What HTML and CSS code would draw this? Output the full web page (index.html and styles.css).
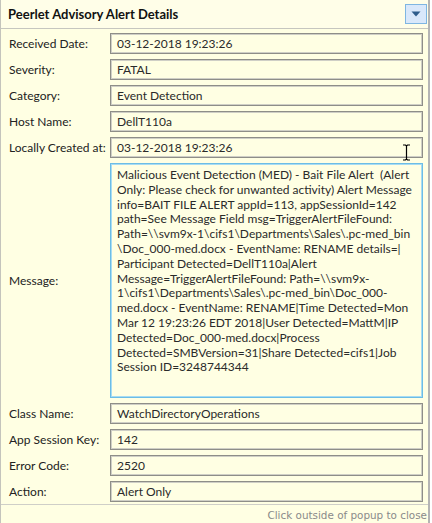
FILE: index.html
```html
<!DOCTYPE html>
<html>
<head>
<meta charset="utf-8">
<link rel="stylesheet" href="styles.css">
</head>
<body>
<div class="popup">
  <div class="header">
    <span class="title">Peerlet Advisory Alert Details</span>
    <span class="dropbtn"><svg width="10" height="6" viewBox="0 0 10 6"><path d="M0.5 0.5 H9.5 L5 5.5 Z" fill="#2f5d8c"/></svg></span>
  </div>
  <div class="form">
    <div class="label">Received Date:</div><div class="field">03-12-2018 19:23:26</div>
    <div class="label">Severity:</div><div class="field">FATAL</div>
    <div class="label">Category:</div><div class="field">Event Detection</div>
    <div class="label">Host Name:</div><div class="field">DellT110a</div>
    <div class="label">Locally Created at:</div><div class="field">03-12-2018 19:23:26</div>
    <div class="label">Message:</div>
    <div class="field message"><div>Malicious Event Detection (MED) - Bait File Alert  (Alert</div><div>Only: Please check for unwanted activity) Alert Message</div><div>info=BAIT FILE ALERT appId=113, appSessionId=142</div><div>path=See Message Field msg=TriggerAlertFileFound:</div><div>Path=\\svm9x-1\cifs1\Departments\Sales\.pc-med_bin</div><div>\Doc_000-med.docx - EventName: RENAME details=|</div><div>Participant Detected=DellT110a|Alert</div><div>Message=TriggerAlertFileFound: Path=\\svm9x-</div><div>1\cifs1\Departments\Sales\.pc-med_bin\Doc_000-</div><div>med.docx - EventName: RENAME|Time Detected=Mon</div><div>Mar 12 19:23:26 EDT 2018|User Detected=MattM|IP</div><div>Detected=Doc_000-med.docx|Process</div><div>Detected=SMBVersion=31|Share Detected=cifs1|Job</div><div>Session ID=3248744344</div></div>
    <div class="label">Class Name:</div><div class="field">WatchDirectoryOperations</div>
    <div class="label">App Session Key:</div><div class="field">142</div>
    <div class="label">Error Code:</div><div class="field">2520</div>
    <div class="label">Action:</div><div class="field">Alert Only</div>
  </div>
  <div class="footer"><span>Click outside of popup to close</span></div>
  <svg class="cursor" width="9" height="17" viewBox="0 0 9 17"><path d="M1 1 H3.5 L4.5 2 L5.5 1 H8 M4.5 2 V15 M1 16 H3.5 L4.5 15 L5.5 16 H8" fill="none" stroke="#000" stroke-width="1.2"/></svg>
</div>
</body>
</html>
```
FILE: styles.css
```css
html, body {
  margin: 0;
  padding: 0;
  background: #ffffff;
}
body {
  font-family: Lato, "Noto Sans", sans-serif;
  font-size: 12px;
  color: #222;
}
.popup {
  position: relative;
  width: 427px;
  height: 523px;
  background: #ffffe3;
  border-left: 1px solid #c4c4bc;
  border-right: 2px solid #b4b4b4;
  display: flex;
  flex-direction: column;
  overflow: hidden;
}
.header {
  height: 28px;
  display: flex;
  align-items: center;
  justify-content: space-between;
  padding: 0 1px 0 7px;
  border-bottom: 1px solid #c6c6bf;
  background: #fffee8;
}
.title {
  font-weight: bold;
  font-size: 13px;
  color: #111;
}
.dropbtn {
  width: 22px;
  height: 20px;
  box-sizing: border-box;
  border: 1px solid #7fb6e2;
  background: #d9e8fb;
  display: flex;
  align-items: center;
  justify-content: center;
}
.form {
  display: grid;
  grid-template-columns: 101px 313px;
  row-gap: 5px;
  padding: 4px 0 0 8px;
  align-items: center;
}
.label {
  color: #222;
  white-space: nowrap;
}
.field {
  height: 21px;
  box-sizing: border-box;
  border: 1px solid #8e8e88;
  box-shadow: inset 0 0 0 1px #cfcfc6;
  padding: 0 6px;
  display: flex;
  align-items: center;
  color: #2a2a2a;
  background: #ffffe3;
  white-space: nowrap;
}
.field.message {
  height: 235px;
  display: block;
  border: 1px solid #6cbde6;
  box-shadow: inset 0 0 0 1px #a8dcf2;
  padding: 4px 6px;
  line-height: 14.8px;
  white-space: pre;
}
.footer {
  margin-top: auto;
  height: 19px;
  border-top: 1px solid #cfcfc8;
  padding-right: 1px;
  padding-top: 2px;
  box-sizing: border-box;
  white-space: nowrap;
  font-family: "DejaVu Sans", sans-serif;
  font-size: 10.4px;
  color: #8a8a8a;
  display: flex;
  align-items: center;
  justify-content: flex-end;
}
.cursor {
  position: absolute;
  left: 401px;
  top: 144px;
}
```
